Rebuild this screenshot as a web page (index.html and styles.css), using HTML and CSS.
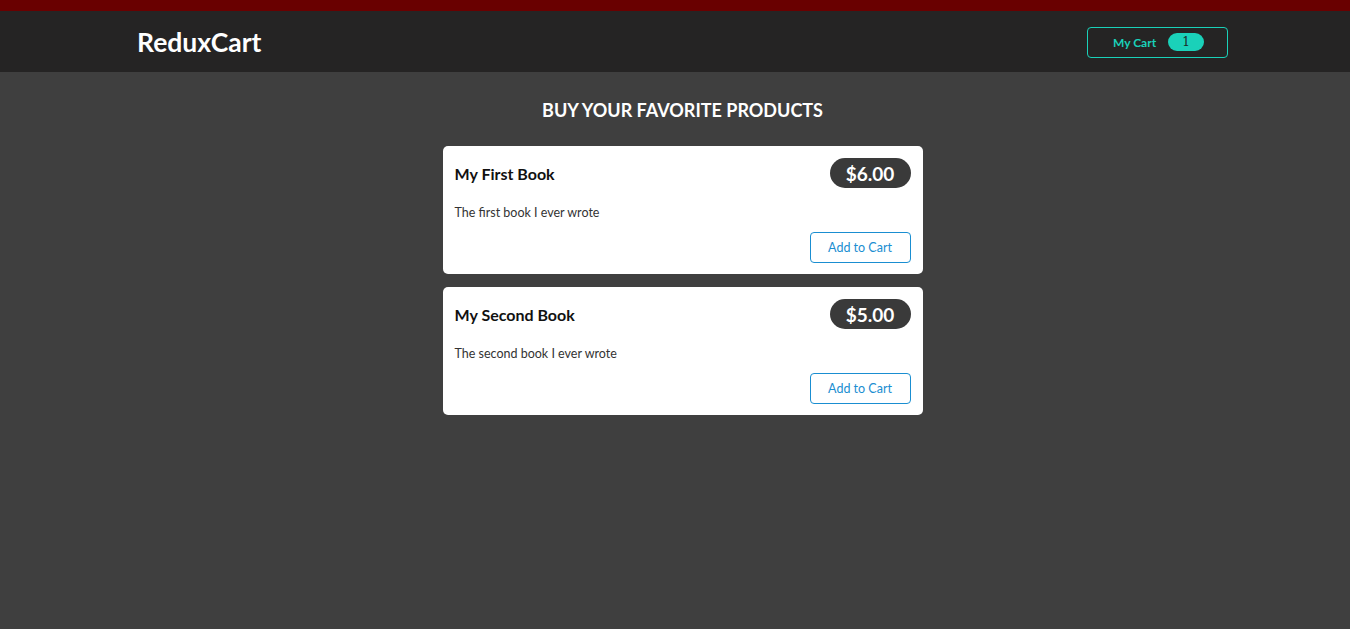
FILE: index.html
```html
<!DOCTYPE html>
<html lang="en">
<head>
<meta charset="utf-8">
<title>ReduxCart</title>
<link rel="stylesheet" href="styles.css">
</head>
<body>
  <section class="notification">
    <p class="notification-msg">Sending</p>
  </section>
  <header class="main-header">
    <h1 class="logo">ReduxCart</h1>
    <button class="cart-button">
      <span>My Cart</span>
      <span class="badge">1</span>
    </button>
  </header>
  <main class="main">
    <section class="products">
      <h2 class="products-title">Buy your favorite products</h2>
      <ul class="product-list">
        <li class="card">
          <div class="card-top">
            <h3 class="card-title">My First Book</h3>
            <div class="price">$6.00</div>
          </div>
          <p class="card-desc">The first book I ever wrote</p>
          <div class="card-actions">
            <button class="add-btn">Add to Cart</button>
          </div>
        </li>
        <li class="card">
          <div class="card-top">
            <h3 class="card-title">My Second Book</h3>
            <div class="price">$5.00</div>
          </div>
          <p class="card-desc">The second book I ever wrote</p>
          <div class="card-actions">
            <button class="add-btn">Add to Cart</button>
          </div>
        </li>
      </ul>
    </section>
  </main>
</body>
</html>
```

FILE: styles.css
```css
* { box-sizing: border-box; }

html, body {
  margin: 0;
  padding: 0;
}

body {
  font-family: "Lato", "Noto Sans", sans-serif;
  background-color: #3f3f3f;
  min-height: 629px;
}

.notification {
  height: 11px;
  background-color: #690000;
  overflow: hidden;
  display: flex;
  justify-content: flex-end;
  align-items: flex-end;
  padding-right: 211px;
}

.notification-msg {
  margin: 0;
  color: #ffffff;
  font-size: 14px;
  line-height: 14px;
  transform: translateY(-11px);
}

.main-header {
  height: 61px;
  background-color: #252424;
  display: flex;
  justify-content: space-between;
  align-items: center;
  padding: 1px 122px 0 137px;
}

.logo {
  margin: 0;
  color: #ffffff;
  font-size: 26.5px;
  font-weight: 700;
}

.cart-button {
  font-family: inherit;
  width: 141px;
  height: 31px;
  background: transparent;
  border: 1px solid #1ad1b9;
  border-radius: 4px;
  color: #1ad1b9;
  font-size: 12px;
  font-weight: 700;
  display: flex;
  align-items: center;
  justify-content: flex-start;
  gap: 12px;
  padding: 0 0 0 25px;
  cursor: pointer;
}

.badge {
  background-color: #1ad1b9;
  color: #1b2a28;
  border-radius: 12px;
  width: 36px;
  height: 18px;
  display: flex;
  align-items: center;
  justify-content: center;
  font-family: "DejaVu Serif", serif;
  font-weight: 400;
  font-size: 12px;
}

.main {
  display: flex;
  justify-content: center;
  padding-left: 15px;
}

.products {
  width: 480px;
  display: flex;
  flex-direction: column;
  align-items: center;
}

.products-title {
  margin: 26px 0 24px;
  color: #ffffff;
  text-transform: uppercase;
  font-size: 18px;
  font-weight: 700;
  line-height: 24px;
  white-space: nowrap;
}

.product-list {
  list-style: none;
  margin: 0;
  padding: 0;
  width: 100%;
  display: flex;
  flex-direction: column;
  gap: 13px;
}

.card {
  background-color: #ffffff;
  border-radius: 5px;
  padding: 12px 12px 12px;
  height: 128px;
}

.card-top {
  display: flex;
  justify-content: space-between;
  align-items: center;
}

.card-title {
  margin: 0;
  font-size: 16px;
  font-weight: 700;
  color: #111111;
}

.price {
  background-color: #3a3a3a;
  color: #ffffff;
  border-radius: 15px;
  width: 81px;
  height: 30px;
  display: flex;
  align-items: center;
  justify-content: center;
  font-size: 19px;
  font-weight: 700;
}

.card-desc {
  margin: 17px 0 0;
  font-size: 12.5px;
  color: #333333;
  line-height: 16px;
}

.card-actions {
  display: flex;
  justify-content: flex-end;
  margin-top: 11px;
}

.add-btn {
  font-family: inherit;
  width: 101px;
  height: 31px;
  background: #ffffff;
  border: 1px solid #1a8ed1;
  border-radius: 4px;
  color: #1a8ed1;
  font-size: 12.5px;
  cursor: pointer;
  padding: 0;
}
```
